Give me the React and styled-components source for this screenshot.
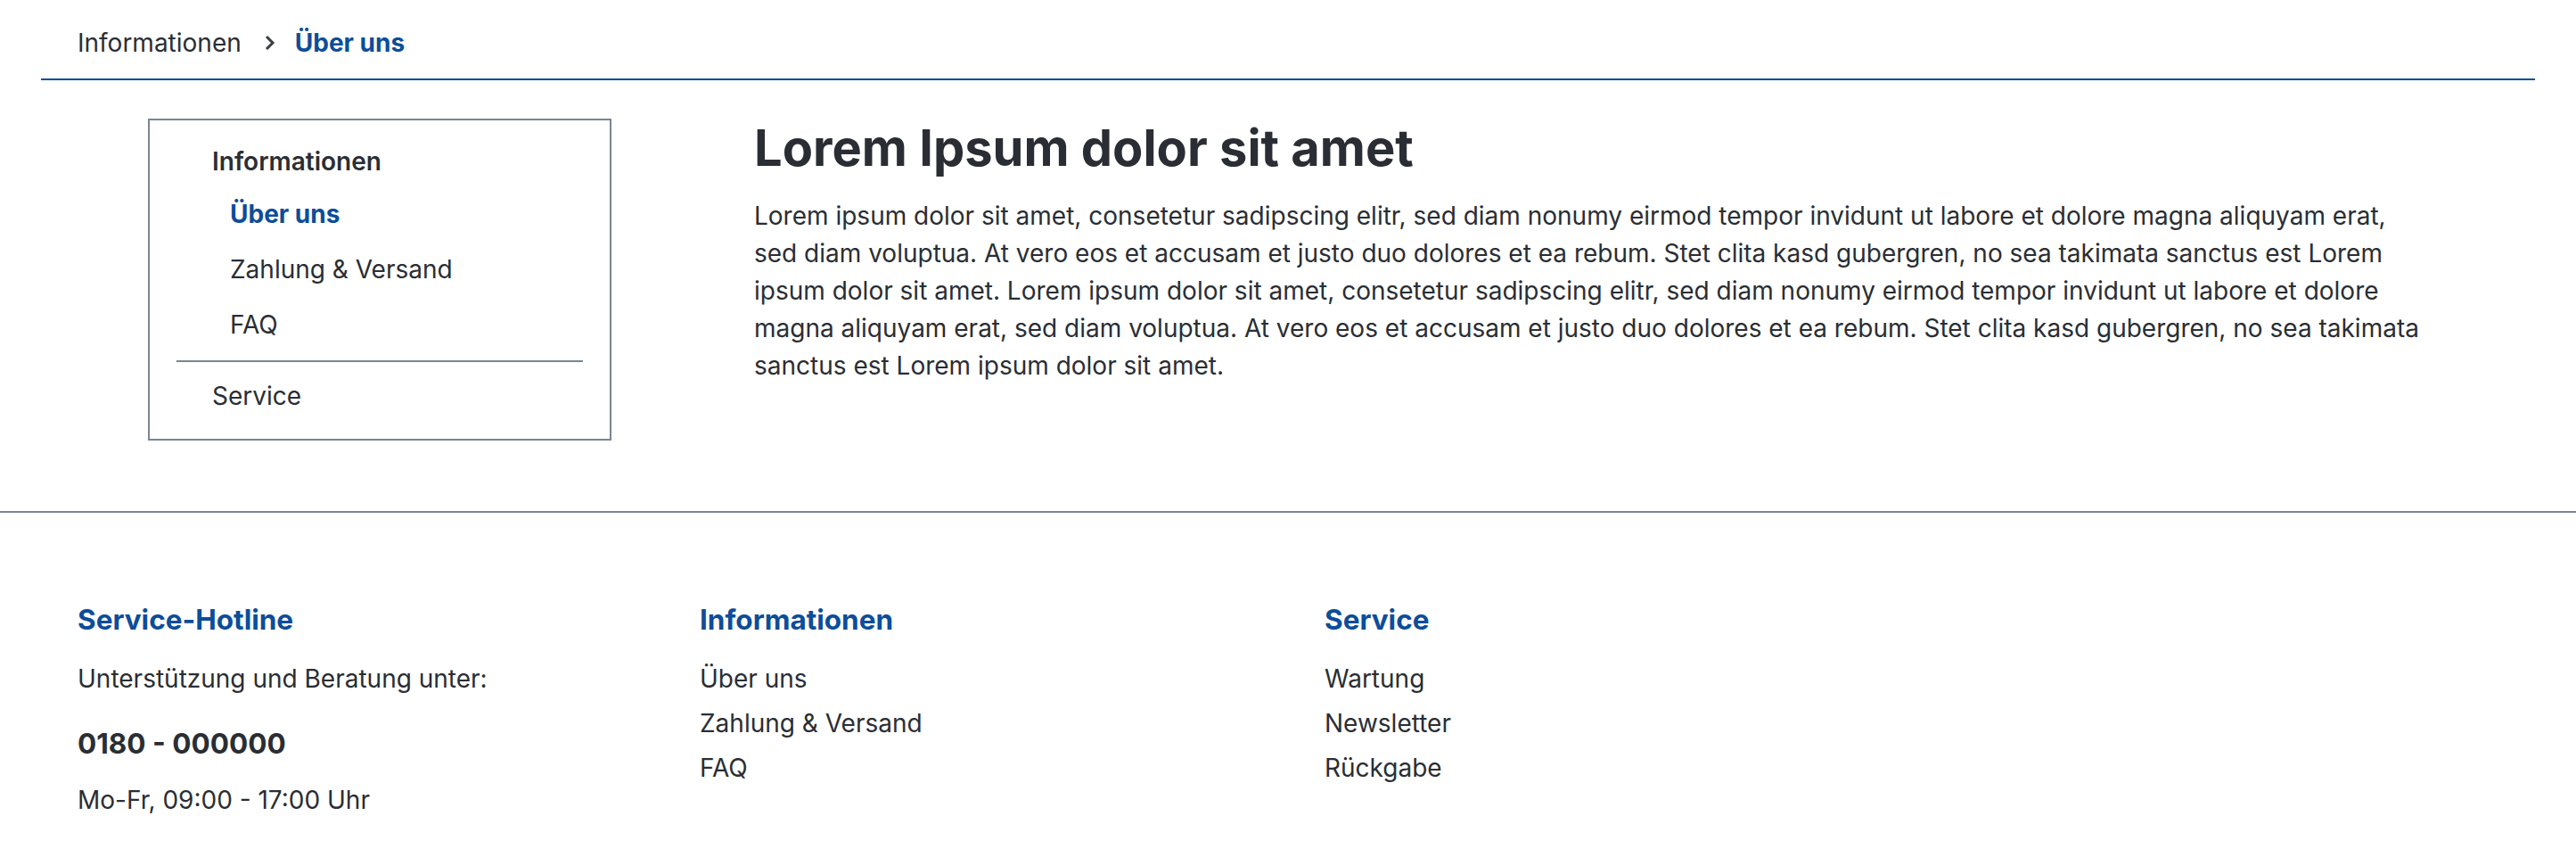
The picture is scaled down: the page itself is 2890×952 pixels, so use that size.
import styled, { createGlobalStyle } from "styled-components";

const GlobalStyle = createGlobalStyle`
  html, body {
    margin: 0;
    padding: 0;
    background: #ffffff;
  }
  body {
    font-family: Inter, "Noto Sans", "Liberation Sans", sans-serif;
    font-size: 28px;
    line-height: 1.5;
    color: #2a2e34;
  }
  * {
    box-sizing: border-box;
  }
`;

const blue = "#0d4d9a";
const grey = "#7a8593";

const Breadcrumb = styled.nav`
  display: flex;
  align-items: center;
  margin: 0 46px;
  padding: 27px 0 19px 41px;
  border-bottom: 2px solid ${blue};
`;

const Crumb = styled.span`
  font-weight: ${({ $active }) => ($active ? 700 : 400)};
  color: ${({ $active }) => ($active ? blue : "#2a2e34")};
`;

const Chevron = styled.svg`
  width: 12px;
  height: 18px;
  margin: 0 22px 0 26px;
`;

const Content = styled.main`
  display: flex;
  align-items: flex-start;
  gap: 160px;
  padding: 43px 165px 79px 166px;
`;

const Sidebar = styled.aside`
  flex: 0 0 520px;
  border: 2px solid ${grey};
  padding: 25px 30px 27px;
`;

const SideTitle = styled.div`
  padding-left: 40px;
  font-weight: ${({ $bold }) => ($bold ? 600 : 400)};
  margin-top: ${({ $gap }) => $gap || 0}px;
`;

const SideList = styled.ul`
  list-style: none;
  margin: 17px 0 0;
  padding: 0 0 0 60px;
  display: flex;
  flex-direction: column;
  gap: 20px;
`;

const SideItem = styled.li`
  font-weight: ${({ $active }) => ($active ? 700 : 400)};
  color: ${({ $active }) => ($active ? blue : "#2a2e34")};
`;

const Divider = styled.hr`
  border: 0;
  border-top: 2px solid ${grey};
  margin: 19px 0 0;
`;

const Article = styled.article`
  flex: 1;
  max-width: 1880px;
`;

const Heading = styled.h1`
  margin: 0 0 21px;
  font-size: 56px;
  line-height: 1.2;
  font-weight: 700;
  color: #2a2e34;
`;

const Paragraph = styled.p`
  margin: 0;
  font-size: 28px;
  line-height: 42px;
`;

const Footer = styled.footer`
  display: grid;
  grid-template-columns: 698px 701px 1fr;
  border-top: 2px solid ${grey};
  padding: 101px 87px 37px;
`;

const Column = styled.div`
  display: flex;
  flex-direction: column;
`;

const FooterHeading = styled.h3`
  margin: 0 0 26px;
  font-size: 31.5px;
  line-height: 1.2;
  font-weight: 700;
  color: ${blue};
`;

const FooterText = styled.div`
  margin-top: ${({ $gap }) => $gap || 0}px;
`;

const Phone = styled.div`
  margin-top: 33px;
  font-size: 31.5px;
  line-height: 1.2;
  font-weight: 700;
`;

const LinkList = styled.ul`
  list-style: none;
  margin: 0;
  padding: 0;
  display: flex;
  flex-direction: column;
  gap: 8px;
`;

const text =
  "Lorem ipsum dolor sit amet, consetetur sadipscing elitr, sed diam nonumy eirmod tempor invidunt ut labore et dolore magna aliquyam erat, sed diam voluptua. At vero eos et accusam et justo duo dolores et ea rebum. Stet clita kasd gubergren, no sea takimata sanctus est Lorem ipsum dolor sit amet. Lorem ipsum dolor sit amet, consetetur sadipscing elitr, sed diam nonumy eirmod tempor invidunt ut labore et dolore magna aliquyam erat, sed diam voluptua. At vero eos et accusam et justo duo dolores et ea rebum. Stet clita kasd gubergren, no sea takimata sanctus est Lorem ipsum dolor sit amet.";

const App = () => {
  return (
    <>
      <GlobalStyle />
      <Breadcrumb>
        <Crumb>Informationen</Crumb>
        <Chevron viewBox="0 0 12 18" fill="none">
          <path d="M2 2l7 7-7 7" stroke="#3a3f46" strokeWidth="3" />
        </Chevron>
        <Crumb $active>Über uns</Crumb>
      </Breadcrumb>

      <Content>
        <Sidebar>
          <SideTitle $bold>Informationen</SideTitle>
          <SideList>
            <SideItem $active>Über uns</SideItem>
            <SideItem>Zahlung &amp; Versand</SideItem>
            <SideItem>FAQ</SideItem>
          </SideList>
          <Divider />
          <SideTitle $gap={17}>Service</SideTitle>
        </Sidebar>

        <Article>
          <Heading>Lorem Ipsum dolor sit amet</Heading>
          <Paragraph>{text}</Paragraph>
        </Article>
      </Content>

      <Footer>
        <Column>
          <FooterHeading>Service-Hotline</FooterHeading>
          <FooterText>Unterstützung und Beratung unter:</FooterText>
          <Phone>0180 - 000000</Phone>
          <FooterText $gap={23}>Mo-Fr, 09:00 - 17:00 Uhr</FooterText>
        </Column>
        <Column>
          <FooterHeading>Informationen</FooterHeading>
          <LinkList>
            <li>Über uns</li>
            <li>Zahlung &amp; Versand</li>
            <li>FAQ</li>
          </LinkList>
        </Column>
        <Column>
          <FooterHeading>Service</FooterHeading>
          <LinkList>
            <li>Wartung</li>
            <li>Newsletter</li>
            <li>Rückgabe</li>
          </LinkList>
        </Column>
      </Footer>
    </>
  );
};

export default App;
